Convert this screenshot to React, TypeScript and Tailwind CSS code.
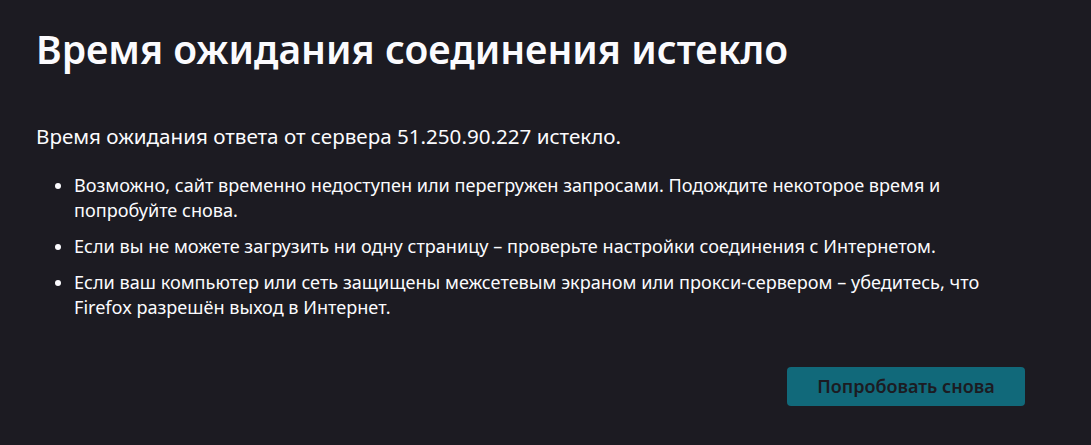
export default function App() {
  const items = [
    "Возможно, сайт временно недоступен или перегружен запросами. Подождите некоторое время и попробуйте снова.",
    "Если вы не можете загрузить ни одну страницу – проверьте настройки соединения с Интернетом.",
    "Если ваш компьютер или сеть защищены межсетевым экраном или прокси-сервером – убедитесь, что Firefox разрешён выход в Интернет.",
  ];

  return (
    <div className="min-h-[445px] w-full bg-[#1c1b22] text-[#fbfbfe] font-['Noto_Sans',sans-serif]">
      <div className="w-[1025px] pl-[36px] pt-[25px]">
        <h1 className="text-[39px] font-semibold leading-[48px]">
          Время ожидания соединения истекло
        </h1>
        <p className="mt-[51px] text-[20.6px] leading-[24px]">
          Время ожидания ответа от сервера 51.250.90.227 истекло.
        </p>
        <ul className="mt-[25px] list-disc space-y-[11px] pl-[38px] text-[18.1px] leading-[25px]">
          {items.map((t) => (
            <li key={t}>{t}</li>
          ))}
        </ul>
        <div className="mt-[47px] flex justify-end">
          <button className="h-[39px] w-[238px] rounded-[4px] bg-[#11697a] text-[18px] font-semibold text-[#1c1b22]">
            Попробовать снова
          </button>
        </div>
      </div>
    </div>
  );
}
